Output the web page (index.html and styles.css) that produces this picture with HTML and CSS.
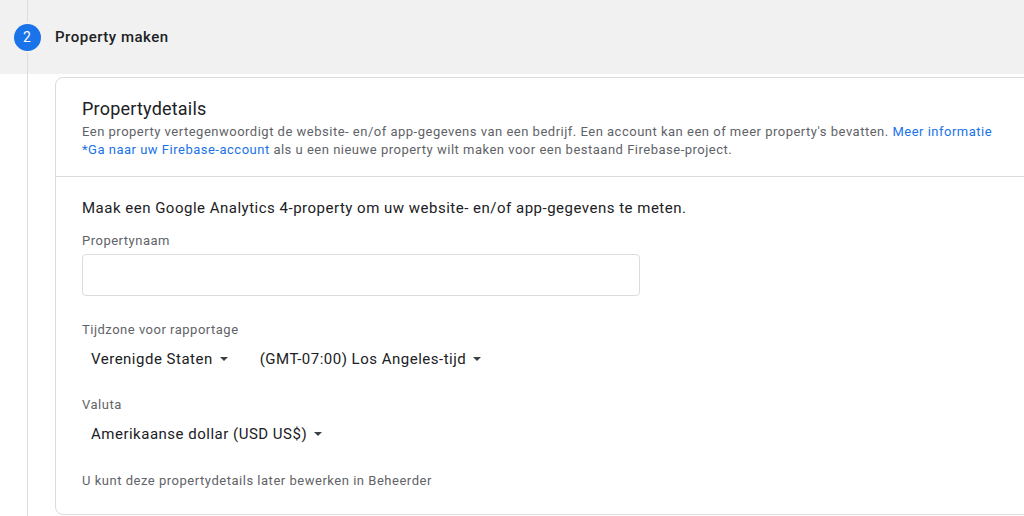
FILE: index.html
```html
<!DOCTYPE html>
<html lang="nl">
<head>
<meta charset="utf-8">
<title>Property maken</title>
<link rel="stylesheet" href="styles.css">
</head>
<body>
<div class="page">
  <div class="step-head">
    <div class="rail rail-head"><span class="step-num">2</span></div>
    <div class="step-title">Property maken</div>
  </div>
  <div class="step-body">
    <div class="rail"></div>
    <div class="card">
      <div class="card-top">
        <h2 class="card-title">Propertydetails</h2>
        <p class="card-desc">Een property vertegenwoordigt de website- en/of app-gegevens van een bedrijf. Een account kan een of meer property's bevatten. <a class="link" href="#">Meer informatie</a><br><a class="link" href="#">*Ga naar uw Firebase-account</a> als u een nieuwe property wilt maken voor een bestaand Firebase-project.</p>
      </div>
      <div class="card-main">
        <p class="lead">Maak een Google Analytics 4-property om uw website- en/of app-gegevens te meten.</p>
        <div class="field-label">Propertynaam</div>
        <div class="input"></div>
        <div class="field-label label-gap">Tijdzone voor rapportage</div>
        <div class="select-row">
          <div class="select">Verenigde Staten<span class="caret"></span></div>
          <div class="select">(GMT-07:00) Los Angeles-tijd<span class="caret"></span></div>
        </div>
        <div class="field-label label-gap2">Valuta</div>
        <div class="select-row">
          <div class="select">Amerikaanse dollar (USD US$)<span class="caret"></span></div>
        </div>
        <p class="note">U kunt deze propertydetails later bewerken in Beheerder</p>
      </div>
    </div>
  </div>
</div>
</body>
</html>
```

FILE: styles.css
```css
* { box-sizing: border-box; }
html, body { margin: 0; padding: 0; }
body {
  font-family: Roboto, "Liberation Sans", Arial, sans-serif;
  color: #202124;
  background: #fff;
  width: 1024px;
  height: 516px;
  overflow: hidden;
}
.page { display: flex; flex-direction: column; height: 516px; }
.step-head {
  display: flex;
  align-items: stretch;
  height: 74px;
  background: #f1f1f1;
}
.rail {
  width: 55px;
  flex: 0 0 55px;
  background: linear-gradient(#dadce0, #dadce0) 27px 0 / 1px 100% no-repeat;
}
.rail-head {
  display: flex;
  align-items: center;
  justify-content: center;
  padding-right: 1px;
}
.step-num {
  width: 27px;
  height: 27px;
  border-radius: 50%;
  background: #1a73e8;
  color: #fff;
  font-size: 14px;
  line-height: 27px;
  text-align: center;
  box-shadow: 0 0 0 2px #f1f1f1;
}
.step-title {
  display: flex;
  align-items: center;
  font-size: 15px;
  font-weight: 500;
  letter-spacing: 0.5px;
  color: #202124;
}
.step-body { display: flex; flex: 1; }
.card {
  margin-top: 3px;
  margin-bottom: 1px;
  width: 985px;
  flex: 0 0 985px;
  border: 1px solid #dadce0;
  border-radius: 8px;
  background: #fff;
}
.card-top {
  padding: 19px 26px 17px;
  border-bottom: 1px solid #dadce0;
}
.card-title {
  margin: 0;
  font-size: 18px;
  line-height: 24px;
  font-weight: 400;
  letter-spacing: 0.2px;
  color: #202124;
}
.card-desc {
  margin: 2px 0 0;
  font-size: 13px;
  line-height: 18px;
  letter-spacing: 0.5px;
  color: #5f6368;
  white-space: nowrap;
}
.link { color: #1a73e8; text-decoration: none; }
.card-main { padding: 21px 26px 0; }
.lead {
  margin: 0;
  font-size: 15px;
  line-height: 20px;
  letter-spacing: 0.5px;
  color: #202124;
}
.field-label {
  margin-top: 14px;
  font-size: 13px;
  line-height: 18px;
  letter-spacing: 0.5px;
  color: #5f6368;
}
.label-gap { margin-top: 25px; }
.label-gap2 { margin-top: 27px; }
.input {
  margin-top: 4px;
  width: 558px;
  height: 42px;
  border: 1px solid #dadce0;
  border-radius: 4px;
}
.select-row { display: flex; gap: 23px; margin-top: 10px; }
.select {
  display: flex;
  align-items: center;
  padding-left: 9px;
  font-size: 15px;
  line-height: 20px;
  letter-spacing: 0.5px;
  color: #202124;
}
.caret {
  margin-left: 7px;
  width: 0;
  height: 0;
  border-left: 4.5px solid transparent;
  border-right: 4.5px solid transparent;
  border-top: 4.5px solid #3c4043;
}
.note {
  margin: 28px 0 0;
  font-size: 13px;
  line-height: 18px;
  letter-spacing: 0.52px;
  color: #5f6368;
}
```
